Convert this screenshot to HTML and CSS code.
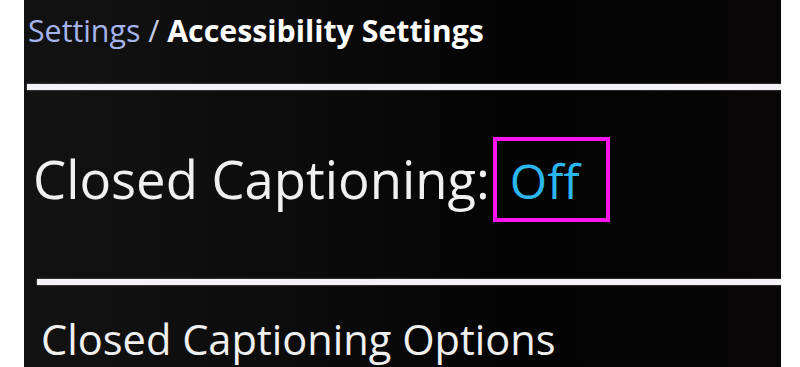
FILE: index.html
```html
<!DOCTYPE html>
<html>
<head>
<meta charset="utf-8">
<link rel="stylesheet" href="styles.css">
</head>
<body>
<div class="screen">
  <div class="crumbs"><span class="crumb-parent">Settings</span> <span class="crumb-sep">/</span> <span class="crumb-current">Accessibility Settings</span></div>
  <div class="rule rule-top"></div>
  <div class="row-main">
    <span class="label">Closed Captioning:</span>
    <span class="value-box"><span class="value">Off</span></span>
  </div>
  <div class="rule rule-mid"></div>
  <div class="row-option">Closed Captioning Options</div>
</div>
</body>
</html>
```
FILE: styles.css
```css
html, body {
  margin: 0;
  padding: 0;
  background: #ffffff;
  width: 800px;
  height: 367px;
  overflow: hidden;
}
.screen {
  margin-left: 24px;
  width: 757px;
  height: 367px;
  background: linear-gradient(90deg, #121212 0%, #0c0c0c 35%, #030303 65%, #080606 100%);
  font-family: "Open Sans", "Noto Sans", sans-serif;
  color: #f0f0f0;
  display: flex;
  flex-direction: column;
  overflow: hidden;
}
.crumbs {
  font-size: 30.3px;
  line-height: 40px;
  padding: 11px 0 0 4px;
  height: 33px;
  white-space: nowrap;
}
.crumb-parent { color: #a6b4ee; }
.crumb-sep { color: #c8cce8; }
.crumb-current { color: #ffffff; font-weight: 700; }
.rule {
  height: 6px;
  flex: none;
  background: #f4f2f6;
  box-shadow: 0 0 2px rgba(255,255,255,0.5);
}
.rule-top { margin: 40px 0 0 3px; }
.rule-mid { margin: 0 0 0 13px; }
.row-main {
  height: 189px;
  flex: none;
  display: flex;
  align-items: flex-start;
  padding-left: 9px;
  box-sizing: border-box;
}
.label {
  font-size: 52.6px;
  line-height: 60px;
  margin-top: 59px;
  white-space: nowrap;
}
.value-box {
  margin: 47px 0 0 3px;
  width: 117px;
  height: 85px;
  box-sizing: border-box;
  border: 4px solid #ff14ee;
  padding: 10px 0 0 13px;
}
.value {
  display: block;
  font-size: 48px;
  line-height: 60px;
  color: #2ab6ee;
}
.row-option {
  font-size: 41.6px;
  line-height: 50px;
  margin-top: 29px;
  padding-left: 17px;
  white-space: nowrap;
}
```
